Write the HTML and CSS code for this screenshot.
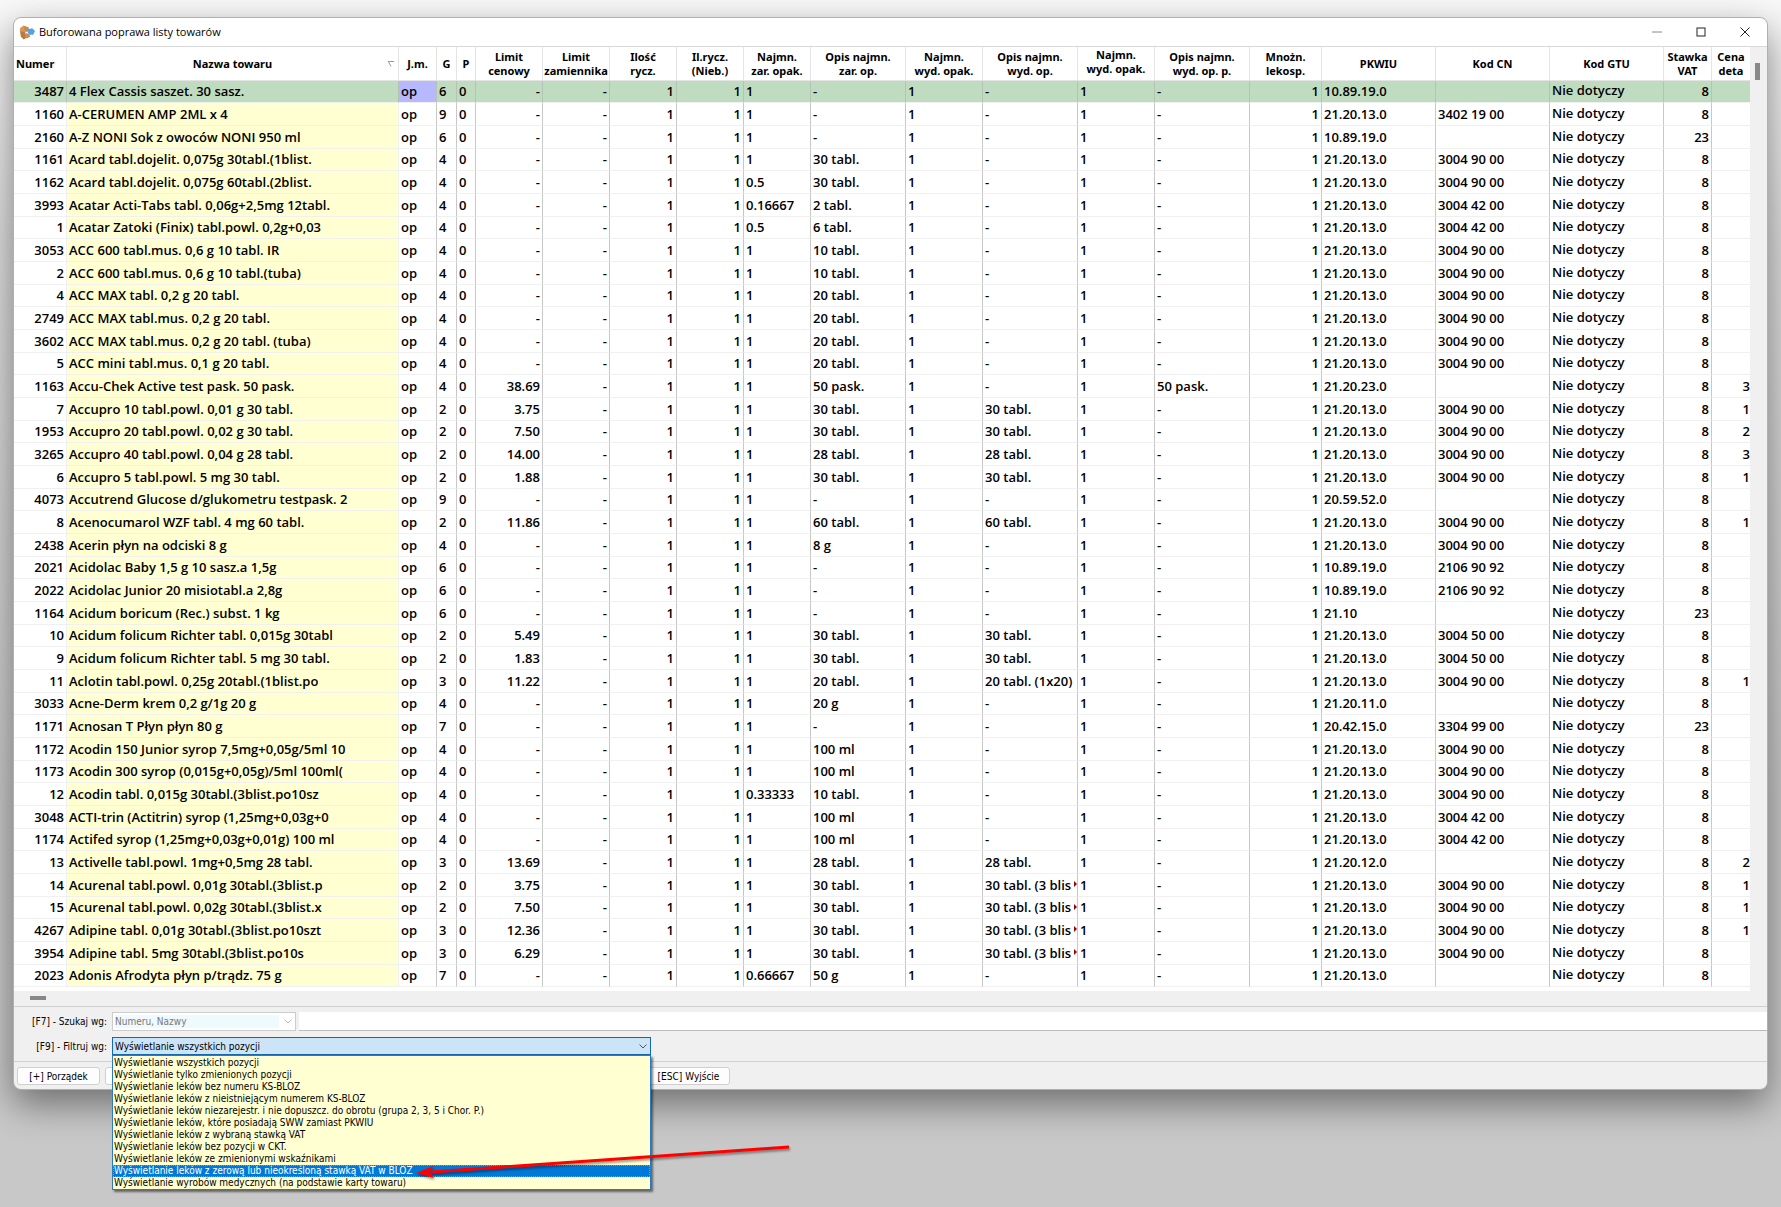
FILE: index.html
```html
<!DOCTYPE html>
<html lang="pl">
<head>
  <meta charset="UTF-8">
  <title>Buforowana poprawa listy towarów</title>
  <link rel="stylesheet" href="styles.css">
</head>
<body>
  <div class="window">
    <header class="titlebar">
      <svg class="app-icon" viewBox="0 0 17 15">
        <path d="M1 3 L5 0 L10 2 L10 6 L6 8 L1 6 Z" fill="#d39a5c"/>
        <path d="M1 6 L6 7 L8 13 L5 15 L2 12 Z" fill="#b97a41"/>
        <path d="M5 1 L10 2 L11 6 L6 6 Z" fill="#c58a50"/>
        <path d="M10 4 L14 3 L17 6 L15 10 L11 10 L9 7 Z" fill="#4fa3e3"/>
        <path d="M7 8 L11 9 L12 12 L8 14 L6 11 Z" fill="#c98f58"/>
      </svg>
      <h1>Buforowana poprawa listy towarów</h1>
      <div class="win-buttons">
        <button aria-label="Minimalizuj"><svg viewBox="0 0 10 10"><path d="M0 5 H10" stroke="#888"/></svg></button>
        <button aria-label="Maksymalizuj"><svg viewBox="0 0 10 10"><rect x="1" y="1" width="8" height="8"/></svg></button>
        <button aria-label="Zamknij"><svg viewBox="0 0 10 10"><path d="M0.500 0.500 L9.500 9.500 M9.500 0.500 L0.500 9.500"/></svg></button>
      </div>
    </header>

    <div class="grid-area">
      <div class="grid-scroll">
        <table>
          <colgroup>
            <col class="w-nr"><col class="w-name"><col class="w-jm"><col class="w-g"><col class="w-p">
            <col class="w-limit"><col class="w-limit"><col class="w-limit"><col class="w-limit"><col class="w-limit">
            <col class="w-opis"><col class="w-wyd"><col class="w-opis"><col class="w-wyd"><col class="w-opis">
            <col class="w-mn"><col class="w-kod"><col class="w-kod"><col class="w-kod"><col class="w-vat"><col>
          </colgroup>
          <thead>
            <tr>
              <th class="left">Numer</th>
              <th class="sorted">Nazwa towaru<svg viewBox="0 0 6 6"><path d="M0 0.500 H6 M0.500 1 L3 5.500"/></svg></th>
              <th>J.m.</th>
              <th>G</th>
              <th>P</th>
              <th>Limit<br>cenowy</th>
              <th>Limit<br>zamiennika</th>
              <th>Ilość<br>rycz.</th>
              <th>Il.rycz.<br>(Nieb.)</th>
              <th>Najmn.<br>zar. opak.</th>
              <th>Opis najmn.<br>zar. op.</th>
              <th>Najmn.<br>wyd. opak.</th>
              <th>Opis najmn.<br>wyd. op.</th>
              <th class="raised">Najmn.<br>wyd. opak.</th>
              <th>Opis najmn.<br>wyd. op. p.</th>
              <th>Mnożn.<br>lekosp.</th>
              <th>PKWIU</th>
              <th>Kod CN</th>
              <th>Kod GTU</th>
              <th>Stawka<br>VAT</th>
              <th class="last">Cena<br>deta</th>
            </tr>
          </thead>
          <tbody id="towary"></tbody>
        </table>
      </div>
      <div class="vscroll"><div class="thumb"></div></div>
    </div>
    <div class="hscroll"><div class="thumb"></div></div>

    <form class="filters">
      <div class="line">
        <label for="szukaj">[F7] - Szukaj wg:</label>
        <div class="combo combo-search">
          <select id="szukaj" disabled><option>Numeru, Nazwy</option></select>
          <svg class="chevron" viewBox="0 0 8 5"><path d="M0.500 0.500 L4 4 L7.500 0.500"/></svg>
        </div>
        <input type="text" class="search" aria-label="Szukana fraza">
      </div>
      <div class="line">
        <label for="filtr">[F9] - Filtruj wg:</label>
        <div class="combo combo-filter">
          <select id="filtr"><option>Wyświetlanie wszystkich pozycji</option></select>
          <svg class="chevron" viewBox="0 0 8 5"><path d="M0.500 0.500 L4 4 L7.500 0.500"/></svg>
          <ul class="options" role="listbox" aria-label="Filtry">
            <li role="option">Wyświetlanie wszystkich pozycji</li>
            <li role="option">Wyświetlanie tylko zmienionych pozycji</li>
            <li role="option">Wyświetlanie leków bez numeru KS-BLOZ</li>
            <li role="option">Wyświetlanie leków z nieistniejącym numerem KS-BLOZ</li>
            <li role="option">Wyświetlanie leków niezarejestr. i nie dopuszcz. do obrotu (grupa 2, 3, 5 i Chor. P.)</li>
            <li role="option">Wyświetlanie leków, które posiadają SWW zamiast PKWIU</li>
            <li role="option">Wyświetlanie leków z wybraną stawką VAT</li>
            <li role="option">Wyświetlanie leków bez pozycji w CKT.</li>
            <li role="option">Wyświetlanie leków ze zmienionymi wskaźnikami</li>
            <li role="option" class="active" aria-selected="true">Wyświetlanie leków z zerową lub nieokreśloną stawką VAT w BLOZ</li>
            <li role="option">Wyświetlanie wyrobów medycznych (na podstawie karty towaru)</li>
          </ul>
          <svg class="arrow" viewBox="0 0 376 40">
            <path d="M374 7 L16 32" stroke="#ff0000" stroke-width="3"/>
            <path d="M1 33 L18 26 L15 32 L19 38 Z" fill="#ff0000"/>
          </svg>
        </div>
      </div>
    </form>

    <footer class="buttons">
      <button>[+] Porządek</button>
      <button class="covered" aria-label="Filtry"></button>
      <button>[ESC] Wyjście</button>
    </footer>
  </div>
  <script src="script.js"></script>
</body>
</html>
```

FILE: styles.css
```css
* { box-sizing: border-box; }
html { height: 100%; }
body {
  margin: 0;
  padding: 17px 13px 40px 13px;
  min-height: 100%;
  overflow: hidden;
  background: linear-gradient(#f8f8f8, #dedede 240px, #c8c8c8 800px);
  font-family: "DejaVu Sans Condensed", "Noto Sans", sans-serif;
  font-size: 10px;
  color: #000;
}
button, input, select { font: inherit; color: inherit; }

.window {
  display: flex;
  flex-direction: column;
  background: #f0f0f0;
  border: 1px solid #b0b0b0;
  border-radius: 8px;
  box-shadow: 0 14px 36px rgba(0,0,0,0.45);
}

/* title bar */
.titlebar {
  display: flex;
  align-items: center;
  height: 29px;
  padding-left: 5px;
  background: #fff;
  border-bottom: 1px solid #d8d8d8;
  border-radius: 8px 8px 0 0;
}
.app-icon { width: 16px; height: 15px; }
.titlebar h1 {
  margin: 0 0 0 4px;
  font: 400 11px/16px "Open Sans", sans-serif;
}
.win-buttons { display: flex; margin-left: auto; }
.win-buttons button {
  display: flex;
  justify-content: center;
  align-items: center;
  width: 44px;
  height: 26px;
  padding: 0;
  border: 0;
  background: none;
}
.win-buttons svg { width: 10px; height: 10px; fill: none; stroke: #222; }

/* data grid */
.grid-area { display: flex; background: #fff; }
.grid-scroll { flex: 1; min-width: 0; overflow: hidden; padding-bottom: 4px; }
table {
  width: 100%;
  table-layout: fixed;
  border-collapse: separate;
  border-spacing: 0;
}
.w-nr { width: 53px; }
.w-name { width: 332px; }
.w-jm { width: 38px; }
.w-g { width: 20px; }
.w-p { width: 19px; }
.w-limit { width: 67px; }
.w-opis { width: 95px; }
.w-wyd { width: 77px; }
.w-mn { width: 72px; }
.w-kod { width: 114px; }
.w-vat { width: 48px; }
th {
  height: 34px;
  padding: 0;
  border-right: 1px solid #e4e4e4;
  border-bottom: 1px solid #e4e4e4;
  font: 700 11px/14px "Noto Sans", sans-serif;
  white-space: nowrap;
  overflow: hidden;
}
th.left { text-align: left; padding-left: 2px; }
th.raised { padding-bottom: 4px; }
th.last, td.last { border-right: 0; }
th.sorted { position: relative; }
th.sorted svg {
  position: absolute;
  right: 4px;
  top: 14px;
  width: 6px;
  height: 6px;
  fill: none;
  stroke: #999;
}
td {
  height: 23px;
  padding: 0 2px;
  border-right: 1px solid #c8c8c8;
  border-bottom: 1px solid #f0f0f0;
  font: 600 13px/20px "Open Sans", sans-serif;
  white-space: nowrap;
  overflow: hidden;
}
tr:nth-child(3n+1) td { height: 22px; line-height: 19px; }
td.num { text-align: right; }
td.nr, td.name { border-right-color: #f0f0f0; }
td.name { background: #ffffd2; }
td.gtu { padding-bottom: 2px; }
td.last { padding: 0; text-align: right; }
td.cut { position: relative; }
td.cut::after {
  content: "";
  position: absolute;
  right: 0;
  top: 7px;
  border: 3px solid transparent;
  border-left-color: #a00000;
  border-right: 0;
}
tr.current td { background: #c0dcc0; border-right-color: #b4c4b4; }
tr.current td.jm { background: #b8b8ff; }

.vscroll { width: 17px; padding: 16px 0 0 5px; background: #f0f0f0; }
.vscroll .thumb { width: 5px; height: 17px; background: #888; }
.hscroll {
  height: 16px;
  padding: 5px 0 0 16px;
  border-bottom: 1px solid #d0d0d0;
}
.hscroll .thumb { width: 16px; height: 4px; background: #888; }

/* search and filter */
.filters { border-bottom: 1px solid #d0d0d0; padding: 5px 0 6px; }
.line { display: flex; align-items: center; height: 19px; }
.line + .line { margin-top: 6px; height: 18px; }
.line label { width: 98px; padding-right: 5px; text-align: right; white-space: nowrap; }
.combo { position: relative; height: 100%; }
.combo select {
  display: block;
  width: 100%;
  height: 100%;
  padding: 0 2px;
  border: 1px solid #ccc;
  border-radius: 0;
  appearance: none;
  background: #fff;
  opacity: 1;
}
.combo-search { width: 184px; }
.combo-search select {
  color: #777;
  background: linear-gradient(#effaff, #effaff) 2px 2px / 164px 13px no-repeat #fff;
}
.combo-filter { width: 539px; }
.combo-filter select { background: #cce4f7; border-color: #1468b8; }
.chevron {
  position: absolute;
  right: 4px;
  top: 7px;
  width: 8px;
  height: 5px;
  fill: none;
  stroke: #555;
}
.combo-search .chevron { stroke: #bbb; }
.search {
  flex: 1;
  min-width: 0;
  height: 19px;
  margin-left: 3px;
  border: 0;
  border-bottom: 1px solid #bbb;
  background: #fff;
}
.options {
  position: absolute;
  top: 100%;
  left: 0;
  z-index: 1;
  width: 100%;
  margin: 0;
  padding: 1px 0 0;
  list-style: none;
  background: #ffffd2;
  border: 1px solid #2a7ac0;
  box-shadow: 2px 2px 2px rgba(0,0,0,0.5);
}
.options li { height: 12px; padding-left: 1px; line-height: 12px; white-space: nowrap; }
.options li.active { background: #0078d7; color: #fff; outline: 1px dotted #d08a48; outline-offset: -1px; }
.arrow {
  position: absolute;
  z-index: 2;
  left: 303px;
  top: 103px;
  width: 376px;
  height: 40px;
  filter: drop-shadow(1px 2px 1px rgba(0,0,0,0.4));
}

/* bottom buttons */
.buttons { display: flex; gap: 5px; padding: 5px 3px 4px; }
.buttons button {
  height: 18px;
  width: 83px;
  padding: 0;
  border: 1px solid #d0d0d0;
  border-radius: 3px;
  background: #fdfdfd;
  white-space: nowrap;
}
.buttons button.covered { width: 537px; }
```

FILE: script.js
```js
// nr, nazwa, G, limit cenowy, najmn. zar. opak., opis zar., opis wyd., opis wyd. p., PKWIU, CN, VAT, cena
const towary = [
  [3487, '4 Flex Cassis saszet. 30 sasz.', 6, '-', '1', '-', '-', '-', '10.89.19.0', '', 8, ''],
  [1160, 'A-CERUMEN AMP 2ML x 4', 9, '-', '1', '-', '-', '-', '21.20.13.0', '3402 19 00', 8, ''],
  [2160, 'A-Z NONI Sok z owoców NONI 950 ml', 6, '-', '1', '-', '-', '-', '10.89.19.0', '', 23, ''],
  [1161, 'Acard tabl.dojelit. 0,075g 30tabl.(1blist.', 4, '-', '1', '30 tabl.', '-', '-', '21.20.13.0', '3004 90 00', 8, ''],
  [1162, 'Acard tabl.dojelit. 0,075g 60tabl.(2blist.', 4, '-', '0.5', '30 tabl.', '-', '-', '21.20.13.0', '3004 90 00', 8, ''],
  [3993, 'Acatar Acti-Tabs tabl. 0,06g+2,5mg 12tabl.', 4, '-', '0.16667', '2 tabl.', '-', '-', '21.20.13.0', '3004 42 00', 8, ''],
  [1, 'Acatar Zatoki (Finix) tabl.powl. 0,2g+0,03', 4, '-', '0.5', '6 tabl.', '-', '-', '21.20.13.0', '3004 42 00', 8, ''],
  [3053, 'ACC 600 tabl.mus. 0,6 g 10 tabl. IR', 4, '-', '1', '10 tabl.', '-', '-', '21.20.13.0', '3004 90 00', 8, ''],
  [2, 'ACC 600 tabl.mus. 0,6 g 10 tabl.(tuba)', 4, '-', '1', '10 tabl.', '-', '-', '21.20.13.0', '3004 90 00', 8, ''],
  [4, 'ACC MAX tabl. 0,2 g 20 tabl.', 4, '-', '1', '20 tabl.', '-', '-', '21.20.13.0', '3004 90 00', 8, ''],
  [2749, 'ACC MAX tabl.mus. 0,2 g 20 tabl.', 4, '-', '1', '20 tabl.', '-', '-', '21.20.13.0', '3004 90 00', 8, ''],
  [3602, 'ACC MAX tabl.mus. 0,2 g 20 tabl. (tuba)', 4, '-', '1', '20 tabl.', '-', '-', '21.20.13.0', '3004 90 00', 8, ''],
  [5, 'ACC mini tabl.mus. 0,1 g 20 tabl.', 4, '-', '1', '20 tabl.', '-', '-', '21.20.13.0', '3004 90 00', 8, ''],
  [1163, 'Accu-Chek Active test pask. 50 pask.', 4, '38.69', '1', '50 pask.', '-', '50 pask.', '21.20.23.0', '', 8, '3'],
  [7, 'Accupro 10 tabl.powl. 0,01 g 30 tabl.', 2, '3.75', '1', '30 tabl.', '30 tabl.', '-', '21.20.13.0', '3004 90 00', 8, '1'],
  [1953, 'Accupro 20 tabl.powl. 0,02 g 30 tabl.', 2, '7.50', '1', '30 tabl.', '30 tabl.', '-', '21.20.13.0', '3004 90 00', 8, '2'],
  [3265, 'Accupro 40 tabl.powl. 0,04 g 28 tabl.', 2, '14.00', '1', '28 tabl.', '28 tabl.', '-', '21.20.13.0', '3004 90 00', 8, '3'],
  [6, 'Accupro 5 tabl.powl. 5 mg 30 tabl.', 2, '1.88', '1', '30 tabl.', '30 tabl.', '-', '21.20.13.0', '3004 90 00', 8, '1'],
  [4073, 'Accutrend Glucose d/glukometru testpask. 2', 9, '-', '1', '-', '-', '-', '20.59.52.0', '', 8, ''],
  [8, 'Acenocumarol WZF tabl. 4 mg 60 tabl.', 2, '11.86', '1', '60 tabl.', '60 tabl.', '-', '21.20.13.0', '3004 90 00', 8, '1'],
  [2438, 'Acerin płyn na odciski 8 g', 4, '-', '1', '8 g', '-', '-', '21.20.13.0', '3004 90 00', 8, ''],
  [2021, 'Acidolac Baby 1,5 g 10 sasz.a 1,5g', 6, '-', '1', '-', '-', '-', '10.89.19.0', '2106 90 92', 8, ''],
  [2022, 'Acidolac Junior 20 misiotabl.a 2,8g', 6, '-', '1', '-', '-', '-', '10.89.19.0', '2106 90 92', 8, ''],
  [1164, 'Acidum boricum (Rec.) subst. 1 kg', 6, '-', '1', '-', '-', '-', '21.10', '', 23, ''],
  [10, 'Acidum folicum Richter tabl. 0,015g 30tabl', 2, '5.49', '1', '30 tabl.', '30 tabl.', '-', '21.20.13.0', '3004 50 00', 8, ''],
  [9, 'Acidum folicum Richter tabl. 5 mg 30 tabl.', 2, '1.83', '1', '30 tabl.', '30 tabl.', '-', '21.20.13.0', '3004 50 00', 8, ''],
  [11, 'Aclotin tabl.powl. 0,25g 20tabl.(1blist.po', 3, '11.22', '1', '20 tabl.', '20 tabl. (1x20)', '-', '21.20.13.0', '3004 90 00', 8, '1'],
  [3033, 'Acne-Derm krem 0,2 g/1g 20 g', 4, '-', '1', '20 g', '-', '-', '21.20.11.0', '', 8, ''],
  [1171, 'Acnosan T Płyn płyn 80 g', 7, '-', '1', '-', '-', '-', '20.42.15.0', '3304 99 00', 23, ''],
  [1172, 'Acodin 150 Junior syrop 7,5mg+0,05g/5ml 10', 4, '-', '1', '100 ml', '-', '-', '21.20.13.0', '3004 90 00', 8, ''],
  [1173, 'Acodin 300 syrop (0,015g+0,05g)/5ml 100ml(', 4, '-', '1', '100 ml', '-', '-', '21.20.13.0', '3004 90 00', 8, ''],
  [12, 'Acodin tabl. 0,015g 30tabl.(3blist.po10sz', 4, '-', '0.33333', '10 tabl.', '-', '-', '21.20.13.0', '3004 90 00', 8, ''],
  [3048, 'ACTI-trin (Actitrin) syrop (1,25mg+0,03g+0', 4, '-', '1', '100 ml', '-', '-', '21.20.13.0', '3004 42 00', 8, ''],
  [1174, 'Actifed syrop (1,25mg+0,03g+0,01g) 100 ml', 4, '-', '1', '100 ml', '-', '-', '21.20.13.0', '3004 42 00', 8, ''],
  [13, 'Activelle tabl.powl. 1mg+0,5mg 28 tabl.', 3, '13.69', '1', '28 tabl.', '28 tabl.', '-', '21.20.12.0', '', 8, '2'],
  [14, 'Acurenal tabl.powl. 0,01g 30tabl.(3blist.p', 2, '3.75', '1', '30 tabl.', '30 tabl. (3 blis', '-', '21.20.13.0', '3004 90 00', 8, '1'],
  [15, 'Acurenal tabl.powl. 0,02g 30tabl.(3blist.x', 2, '7.50', '1', '30 tabl.', '30 tabl. (3 blis', '-', '21.20.13.0', '3004 90 00', 8, '1'],
  [4267, 'Adipine tabl. 0,01g 30tabl.(3blist.po10szt', 3, '12.36', '1', '30 tabl.', '30 tabl. (3 blis', '-', '21.20.13.0', '3004 90 00', 8, '1'],
  [3954, 'Adipine tabl. 5mg 30tabl.(3blist.po10s', 3, '6.29', '1', '30 tabl.', '30 tabl. (3 blis', '-', '21.20.13.0', '3004 90 00', 8, ''],
  [2023, 'Adonis Afrodyta płyn p/trądz. 75 g', 7, '-', '0.66667', '50 g', '-', '-', '21.20.13.0', '', 8, '']
];

const klasy = ['num nr', 'name', 'jm', '', '', 'num', 'num', 'num', 'num', '', '', '', '', '', '', 'num', '', '', 'gtu', 'num', 'last'];
const tbody = document.getElementById('towary');

towary.forEach(([nr, nazwa, g, limit, zar, opisZar, opisWyd, opisP, pkwiu, cn, vat, cena], i) => {
  const tr = tbody.insertRow();
  if (i === 0) tr.className = 'current';
  const pola = [nr, nazwa, 'op', g, 0, limit, '-', 1, 1, zar, opisZar, 1, opisWyd, 1, opisP, 1, pkwiu, cn, 'Nie dotyczy', vat, cena];
  pola.forEach((wartosc, k) => {
    const td = tr.insertCell();
    td.className = klasy[k];
    td.textContent = wartosc;
    if (k === 12 && wartosc.endsWith('blis')) td.classList.add('cut');
  });
});
```
